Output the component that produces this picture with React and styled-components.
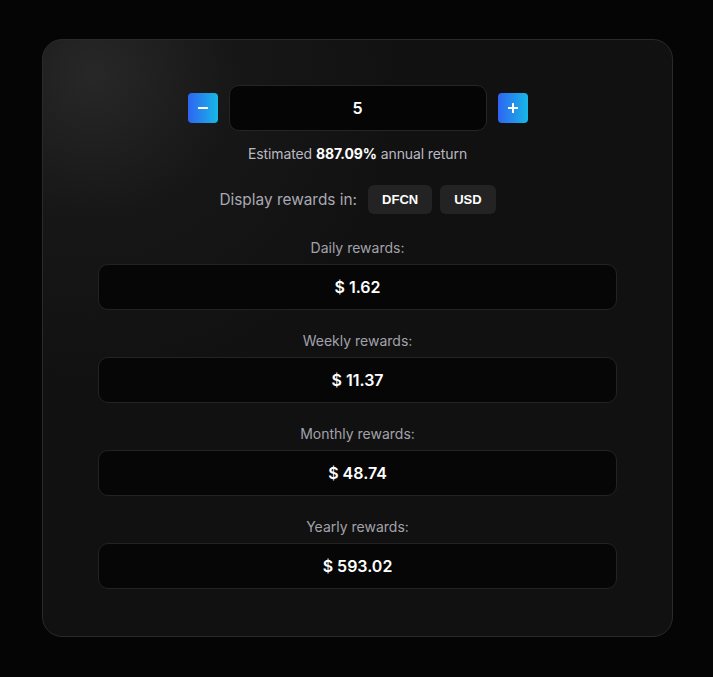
import React, { useState } from 'react'
import styled, { createGlobalStyle } from 'styled-components'

const GlobalStyle = createGlobalStyle`
  html, body {
    margin: 0;
    padding: 0;
    background: #050505;
  }
  body {
    font-family: Inter, "Noto Sans", sans-serif;
    color: #fff;
  }
`

const Page = styled.div`
  min-height: 677px;
  padding-top: 39px;
  box-sizing: border-box;
`

const Card = styled.div`
  width: 631px;
  margin: 0 0 0 42px;
  box-sizing: border-box;
  padding: 45px 55px 47px;
  border: 1px solid #2a2a2a;
  border-radius: 20px;
  background:
    radial-gradient(circle at 8% 6%, rgba(62, 62, 62, 0.5) 0px, rgba(40, 40, 40, 0.25) 140px, rgba(17, 17, 17, 0) 320px),
    #111111;
  display: flex;
  flex-direction: column;
  align-items: center;
`

const Stepper = styled.div`
  display: flex;
  align-items: center;
  gap: 11px;
`

const StepButton = styled.button`
  width: 30px;
  height: 30px;
  border: none;
  border-radius: 4px;
  padding: 0;
  background: linear-gradient(90deg, #2f64f2 0%, #17b8e6 100%);
  display: flex;
  align-items: center;
  justify-content: center;
  cursor: pointer;
`

const AmountInput = styled.input`
  width: 258px;
  height: 46px;
  box-sizing: border-box;
  background: #050505;
  border: 1px solid #252525;
  border-radius: 10px;
  color: #fff;
  text-align: center;
  font-family: inherit;
  font-size: 16px;
  font-weight: 600;
  outline: none;
`

const Estimate = styled.p`
  margin: 13px 0 0;
  font-size: 14px;
  line-height: 20px;
  color: #b9b9c2;
  letter-spacing: -0.1px;

  strong {
    color: #fff;
    font-weight: 700;
  }
`

const DisplayRow = styled.div`
  margin-top: 21px;
  display: flex;
  align-items: center;
  gap: 8px;
`

const DisplayLabel = styled.span`
  font-size: 15.4px;
  color: #a9a9b2;
  margin-right: 3px;
`

const UnitButton = styled.button`
  height: 29px;
  padding: 0 14px;
  border: none;
  border-radius: 6px;
  background: #232323;
  color: #fff;
  font-family: "Liberation Sans", Arial, sans-serif;
  font-size: 13px;
  font-weight: 700;
  cursor: pointer;
`

const RewardBlock = styled.div`
  width: 100%;
  display: flex;
  flex-direction: column;
  align-items: center;
  margin-top: ${p => (p.$first ? 24 : 21)}px;
`

const RewardLabel = styled.div`
  font-size: 14px;
  line-height: 20px;
  color: #a2a2ab;
  margin-bottom: 6px;
`

const RewardValue = styled.div`
  width: 100%;
  height: 46px;
  box-sizing: border-box;
  background: #060606;
  border: 1px solid #232323;
  border-radius: 10px;
  display: flex;
  align-items: center;
  justify-content: center;
  font-size: 16px;
  font-weight: 600;
  color: #fff;
`

const Minus = () => (
  <svg width="12" height="12" viewBox="0 0 12 12">
    <rect x="1" y="5" width="10" height="2" rx="0.5" fill="#fff" />
  </svg>
)

const Plus = () => (
  <svg width="12" height="12" viewBox="0 0 12 12">
    <rect x="1" y="5" width="10" height="2" rx="0.5" fill="#fff" />
    <rect x="5" y="1" width="2" height="10" rx="0.5" fill="#fff" />
  </svg>
)

const rewards = [
  { label: 'Daily rewards:', value: '$ 1.62' },
  { label: 'Weekly rewards:', value: '$ 11.37' },
  { label: 'Monthly rewards:', value: '$ 48.74' },
  { label: 'Yearly rewards:', value: '$ 593.02' },
]

export default function App() {
  const [amount, setAmount] = useState(5)

  return (
    <Page>
      <GlobalStyle />
      <Card>
        <Stepper>
          <StepButton onClick={() => setAmount(Math.max(0, amount - 1))}>
            <Minus />
          </StepButton>
          <AmountInput value={amount} onChange={e => setAmount(e.target.value)} />
          <StepButton onClick={() => setAmount(Number(amount) + 1)}>
            <Plus />
          </StepButton>
        </Stepper>
        <Estimate>
          Estimated <strong>887.09%</strong> annual return
        </Estimate>
        <DisplayRow>
          <DisplayLabel>Display rewards in:</DisplayLabel>
          <UnitButton>DFCN</UnitButton>
          <UnitButton>USD</UnitButton>
        </DisplayRow>
        {rewards.map((r, i) => (
          <RewardBlock key={r.label} $first={i === 0}>
            <RewardLabel>{r.label}</RewardLabel>
            <RewardValue>{r.value}</RewardValue>
          </RewardBlock>
        ))}
      </Card>
    </Page>
  )
}
